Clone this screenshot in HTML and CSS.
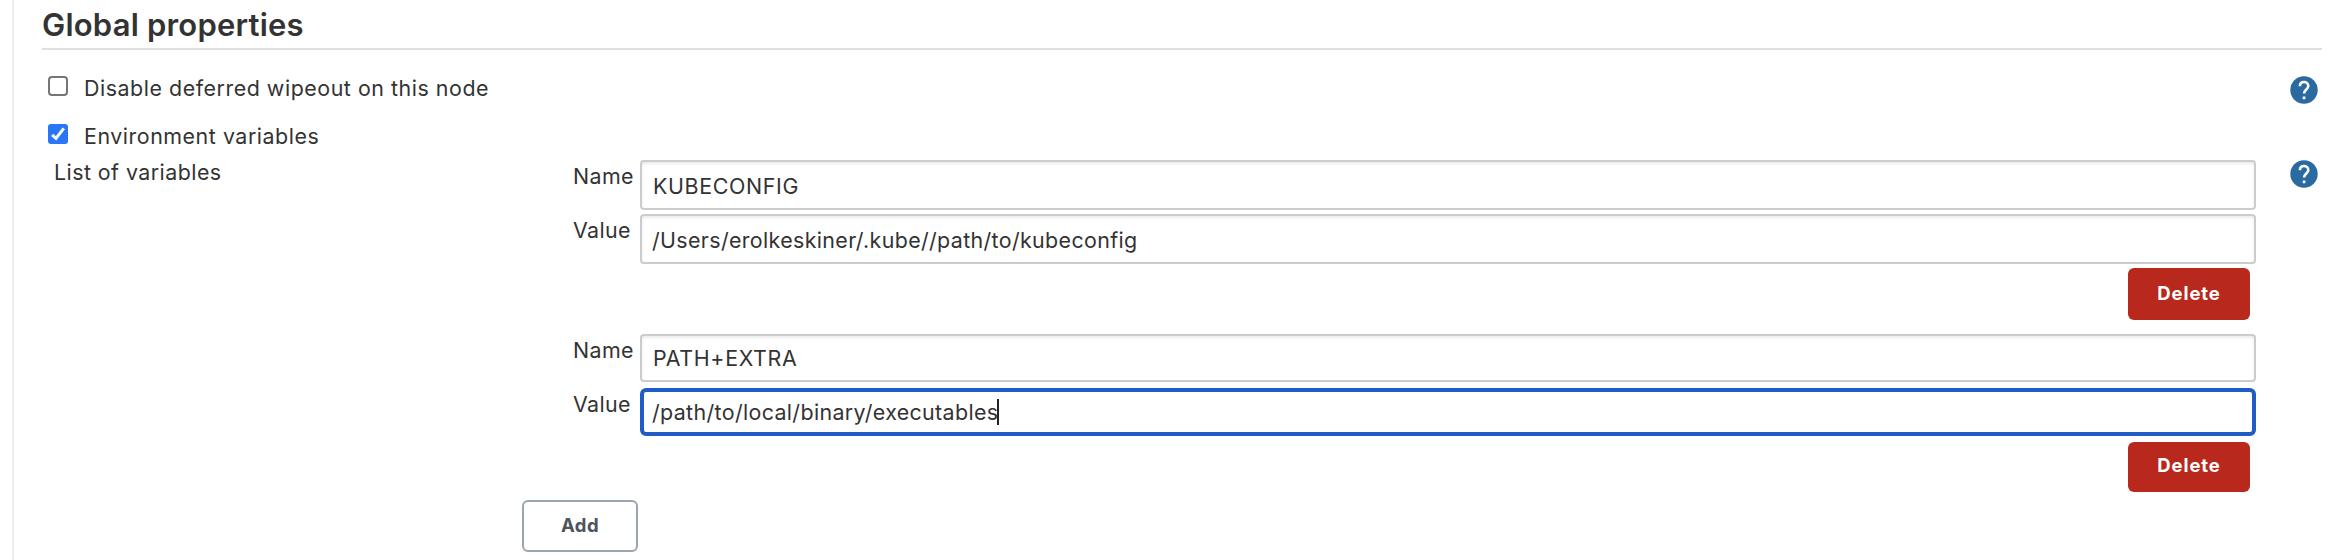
FILE: index.html
```html
<!DOCTYPE html>
<html lang="en">
<head>
<meta charset="utf-8">
<title>Global properties</title>
<link rel="stylesheet" href="styles.css">
</head>
<body>
<main class="panel">
  <h1 class="heading">Global properties</h1>
  <section class="options">
    <div class="option">
      <svg class="check" viewBox="0 0 20 20"><rect x="1" y="1" width="18" height="18" rx="3" fill="#fff" stroke="#767676" stroke-width="2"/></svg>
      <span class="label">Disable deferred wipeout on this node</span>
      <svg class="help" viewBox="0 0 28 28"><circle cx="14" cy="14" r="13.7" fill="#2a6aa0"/><path d="M9.9 10.2C9.9 7.6 11.6 6 14 6s4.3 1.6 4.3 4c0 3.4-4.2 3.8-4.2 7.6" fill="none" stroke="#fff" stroke-width="2.6"/><path d="M12.7 20.5h2.7v2.7h-2.7z" fill="#fff"/></svg>
    </div>
    <div class="option">
      <svg class="check" viewBox="0 0 20 20"><rect width="20" height="20" rx="3" fill="#2976f6"/><path d="M4.2 10.8 8 14.4 15.8 4.4" fill="none" stroke="#fff" stroke-width="3"/></svg>
      <span class="label">Environment variables</span>
    </div>
  </section>
  <section class="list">
    <div class="list-title">List of variables</div>
    <div class="entries">
      <div class="entry">
        <div class="field"><span class="name">Name</span><div class="input upper">KUBECONFIG</div></div>
        <div class="field"><span class="name">Value</span><div class="input">/Users/erolkeskiner/.kube//path/to/kubeconfig</div></div>
        <button class="delete">Delete</button>
      </div>
      <div class="entry entry-last">
        <div class="field"><span class="name">Name</span><div class="input upper">PATH+EXTRA</div></div>
        <div class="field"><span class="name">Value</span><div class="input focused">/path/to/local/binary/executables<i class="caret"></i></div></div>
        <button class="delete">Delete</button>
      </div>
      <button class="add">Add</button>
    </div>
    <svg class="help" viewBox="0 0 28 28"><circle cx="14" cy="14" r="13.7" fill="#2a6aa0"/><path d="M9.9 10.2C9.9 7.6 11.6 6 14 6s4.3 1.6 4.3 4c0 3.4-4.2 3.8-4.2 7.6" fill="none" stroke="#fff" stroke-width="2.6"/><path d="M12.7 20.5h2.7v2.7h-2.7z" fill="#fff"/></svg>
  </section>
</main>
</body>
</html>
```
FILE: styles.css
```css
* { box-sizing: border-box; }
body {
  margin: 0;
  background: #fff;
  color: #333;
  font: 21.4px/30px Inter, "Liberation Sans", sans-serif;
  letter-spacing: .54px;
  height: 560px;
  overflow: hidden;
}
.panel {
  height: 560px;
  margin-left: 12px;
  padding: 0 6px 0 28px;
  border-left: 2px solid #e9eef2;
}
.heading {
  height: 50px;
  margin: 0;
  padding-top: 4px;
  border-bottom: 2px solid #e0e0e0;
  font-size: 31px;
  line-height: 41px;
  font-weight: 600;
  letter-spacing: .2px;
}
.options { padding: 26px 4px 0 6px; }
.option { display: flex; height: 48px; align-items: flex-start; }
.check { width: 20px; height: 20px; flex: none; }
.label { flex: 1; margin: -3px 0 0 16px; }
.help { width: 28px; height: 28px; flex: none; }
.list {
  display: flex;
  margin-top: -12px;
  padding: 0 4px 0 12px;
}
.list-title { width: 468px; line-height: 24px; letter-spacing: .45px; }
.entries { width: 1734px; margin-right: 34px; }
.field { display: flex; height: 50px; margin-bottom: 4px; padding-left: 51px; }
.name { width: 67px; line-height: 32px; letter-spacing: .4px; }
.input {
  display: flex;
  align-items: center;
  flex: 1;
  border: 2px solid #ccc;
  border-radius: 4px;
  padding: 2px 0 0 10px;
  letter-spacing: .36px;
  box-shadow: inset 0 2px 3px rgba(0,0,0,.08);
}
.input.upper { padding-left: 11px; letter-spacing: .65px; }
button { font: 700 18.5px/24px Inter, sans-serif; padding: 0; }
.delete {
  display: block;
  width: 122px;
  height: 52px;
  margin: 0 6px 14px auto;
  padding-bottom: 2px;
  border: 0;
  border-radius: 6px;
  background: #b9281c;
  color: #fff;
  letter-spacing: .9px;
}
.entry-last .field { height: 48px; margin-bottom: 6px; }
.entry-last .input { padding-top: 0; }
.entry-last .delete { height: 50px; margin-bottom: 8px; padding-bottom: 4px; }
.input.focused { border: 4px solid #1f5dc4; border-radius: 6px; padding-left: 8px; box-shadow: none; }
.caret { width: 2px; height: 26px; margin-left: -1px; background: #222; }
.add {
  width: 116px;
  height: 52px;
  padding-bottom: 2px;
  border: 2px solid #9aa5af;
  border-radius: 6px;
  background: #fff;
  color: #4d545d;
  letter-spacing: .5px;
}
```
